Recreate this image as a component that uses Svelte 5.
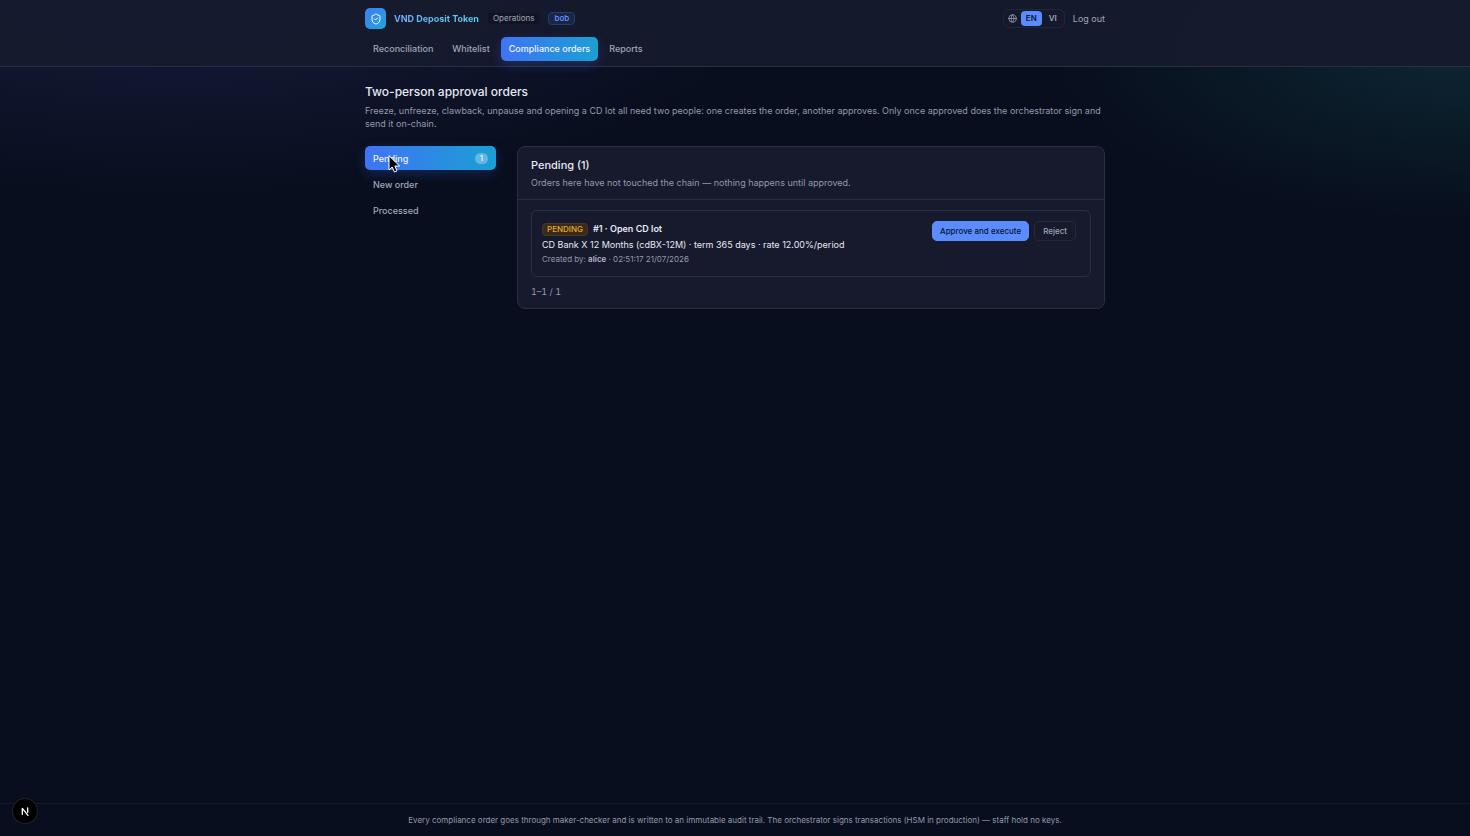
<script lang="ts">
  interface Order {
    id: number;
    status: string;
    kind: string;
    detail: string;
    creator: string;
    createdAt: string;
  }

  const nav = ["Reconciliation", "Whitelist", "Compliance orders", "Reports"];
  const langs = ["EN", "VI"];

  const orders: Order[] = [
    {
      id: 1,
      status: "PENDING",
      kind: "Open CD lot",
      detail: "CD Bank X 12 Months (cdBX-12M) · term 365 days · rate 12.00%/period",
      creator: "alice",
      createdAt: "02:51:17 21/07/2026",
    },
  ];

  let page = $state("Compliance orders");
  let lang = $state("EN");
  let tab = $state("Pending");

  let tabs = $derived([
    { name: "Pending", count: orders.length },
    { name: "New order", count: 0 },
    { name: "Processed", count: 0 },
  ]);
</script>

<div class="app">
  <header class="topbar">
    <div class="container">
      <div class="brand-row">
        <span class="logo">
          <svg viewBox="0 0 24 24" aria-hidden="true">
            <path
              d="M20 13c0 5-3.5 7.5-7.66 8.95a1 1 0 0 1-.67-.01C7.5 20.5 4 18 4 13V6a1 1 0 0 1 1-1c2 0 4.5-1.2 6.24-2.72a1.17 1.17 0 0 1 1.52 0C14.51 3.81 17 5 19 5a1 1 0 0 1 1 1z"
            />
            <path d="m9 12 2 2 4-4" />
          </svg>
        </span>
        <span class="brand">VND Deposit Token</span>
        <span class="chip">Operations</span>
        <span class="chip chip--user">bob</span>
        <div class="actions">
          <div class="langs">
            <svg viewBox="0 0 24 24" aria-hidden="true">
              <circle cx="12" cy="12" r="10" />
              <path d="M12 2a14.5 14.5 0 0 0 0 20 14.5 14.5 0 0 0 0-20" />
              <path d="M2 12h20" />
            </svg>
            {#each langs as l}
              <button class="lang" class:lang--active={lang === l} onclick={() => (lang = l)}>{l}</button>
            {/each}
          </div>
          <button class="logout">Log out</button>
        </div>
      </div>
      <nav class="nav">
        {#each nav as item}
          <a href="#top" class="nav-link" class:active={page === item} onclick={() => (page = item)}>{item}</a>
        {/each}
      </nav>
    </div>
  </header>

  <main class="container main">
    <h1>Two-person approval orders</h1>
    <p class="intro">
      Freeze, unfreeze, clawback, unpause and opening a CD lot all need two people: one creates the order,
      another approves. Only once approved does the orchestrator sign and send it on-chain.
    </p>

    <div class="layout">
      <div class="tabs">
        {#each tabs as t}
          <button class="tab" class:active={tab === t.name} onclick={() => (tab = t.name)}>
            {t.name}
            {#if t.count > 0}<span class="count">{t.count}</span>{/if}
          </button>
        {/each}
        <svg class="pointer" viewBox="0 0 12 18" aria-hidden="true">
          <path d="M1 1v14l3.2-3 2.2 5 2.6-1.1-2.2-4.9h4.4z" />
        </svg>
      </div>

      <section class="card">
        <div class="card-head">
          <h2>Pending ({orders.length})</h2>
          <p>Orders here have not touched the chain — nothing happens until approved.</p>
        </div>
        <div class="card-body">
          {#each orders as order}
            <article class="order">
              <div class="order-info">
                <div class="order-title">
                  <span class="status">{order.status}</span>
                  #{order.id} · {order.kind}
                </div>
                <div class="order-detail">{order.detail}</div>
                <div class="order-meta">Created by: <b>{order.creator}</b> · {order.createdAt}</div>
              </div>
              <div class="order-actions">
                <button class="btn btn--primary">Approve and execute</button>
                <button class="btn">Reject</button>
              </div>
            </article>
          {/each}
          <div class="range">1–{orders.length} / {orders.length}</div>
        </div>
      </section>
    </div>
  </main>

  <footer class="footer">
    Every compliance order goes through maker-checker and is written to an immutable audit trail. The
    orchestrator signs transactions (HSM in production) — staff hold no keys.
  </footer>

  <button class="dev" aria-label="Open dev tools">
    <svg viewBox="0 0 24 24" aria-hidden="true">
      <path d="M8 17V8l8.5 10.5" />
      <path d="M16 7.5v6.5" />
    </svg>
  </button>
</div>

<style>
  :global(body) {
    background: #080e1d;
  }

  .app {
    --text: #e6e9f5;
    --muted: #9499ad;
    --line: #282e43;
    --panel: #161a2c;
    --accent: #5b8cff;
    --grad: linear-gradient(90deg, #3f74f3, #1b9fd4);
    display: flex;
    flex-direction: column;
    min-height: 100vh;
    color: var(--text);
    font-family: Inter, sans-serif;
    font-size: 9px;
    line-height: 13px;
    background:
      radial-gradient(600px 200px at 12% 0, #171a3a, transparent),
      radial-gradient(420px 170px at 100% 50px, #0d2632, transparent),
      #080e1d;
  }

  button {
    font: inherit;
    color: inherit;
    background: none;
    border: 0;
    padding: 0;
    cursor: pointer;
  }

  h1,
  h2,
  p {
    margin: 0;
  }

  .container {
    width: 100%;
    max-width: 740px;
    margin: 0 auto;
  }

  .topbar {
    background: rgba(22, 27, 45, 0.9);
    border-bottom: 1px solid var(--line);
  }

  .brand-row {
    display: flex;
    align-items: center;
    gap: 8px;
    height: 37px;
  }

  .logo {
    display: grid;
    place-items: center;
    width: 21px;
    height: 21px;
    border-radius: 5px;
    background: linear-gradient(135deg, #3f7df5, #20a5dc);
  }

  svg {
    fill: none;
    stroke: currentColor;
    stroke-width: 2;
    stroke-linecap: round;
    stroke-linejoin: round;
  }

  .logo svg {
    width: 12px;
    height: 12px;
    color: #fff;
  }

  .brand {
    font-size: 9px;
    font-weight: 700;
    background: linear-gradient(90deg, #74acff, #5bd0ee);
    background-clip: text;
    color: transparent;
  }

  .chip {
    padding: 0 5px;
    border-radius: 4px;
    border: 1px solid #141828;
    background: #111523;
    color: #a3a8b9;
    font-size: 8px;
    line-height: 11px;
  }

  .chip--user {
    border-color: #263b70;
    background: #192447;
    color: #6b98ff;
    font-weight: 500;
  }

  .actions {
    display: flex;
    align-items: center;
    gap: 8px;
    margin-left: auto;
    color: #a0a6b9;
  }

  .langs {
    display: flex;
    align-items: center;
    gap: 2px;
    padding: 1px 2px 1px 4px;
    border: 1px solid #20263a;
    border-radius: 6px;
  }

  .langs svg {
    width: 9px;
    height: 9px;
    margin-right: 2px;
  }

  .lang {
    padding: 1px 5px;
    border-radius: 4px;
    font-size: 8px;
    font-weight: 600;
  }

  .lang--active {
    background: var(--accent);
    color: #0a1330;
  }

  .nav {
    display: flex;
    gap: 3px;
    padding-bottom: 5px;
  }

  .nav-link {
    padding: 0 8px;
    border-radius: 5px;
    color: #a0a6b9;
    font-weight: 500;
    line-height: 24px;
    text-decoration: none;
  }

  .active,
  .tab.active {
    background: var(--grad);
    color: #f0f6ff;
    box-shadow: 0 4px 12px rgba(63, 100, 243, 0.25);
  }

  .main {
    flex: 1;
    padding-top: 16px;
  }

  h1 {
    font-size: 12px;
    font-weight: 500;
    line-height: 17px;
  }

  .intro {
    margin-top: 4px;
    color: var(--muted);
  }

  .layout {
    display: grid;
    grid-template-columns: 131px 1fr;
    align-items: start;
    gap: 21px;
    margin-top: 16px;
  }

  .tabs {
    position: relative;
    display: grid;
    gap: 2px;
  }

  .tab {
    display: flex;
    align-items: center;
    justify-content: space-between;
    height: 24px;
    padding: 0 8px;
    border-radius: 5px;
    color: #a0a6b9;
    font-weight: 500;
  }

  .count {
    padding: 0 5px;
    border-radius: 6px;
    background: rgba(255, 255, 255, 0.3);
    font-size: 8px;
    line-height: 11px;
  }

  .pointer {
    position: absolute;
    left: 23px;
    top: 9px;
    width: 12px;
    height: 18px;
    fill: #000;
    stroke: #fff;
    stroke-width: 1;
  }

  .card {
    border: 1px solid var(--line);
    border-radius: 8px;
    background: var(--panel);
  }

  .card-head {
    padding: 10px 13px;
    border-bottom: 1px solid var(--line);
  }

  .card-head p {
    margin-top: 3px;
    color: var(--muted);
  }

  h2 {
    font-size: 11px;
    font-weight: 500;
    line-height: 16px;
  }

  .card-body {
    padding: 10px 13px;
  }

  .order {
    display: flex;
    justify-content: space-between;
    padding: 10px 14px 10px 10px;
    border: 1px solid var(--line);
    border-radius: 6px;
  }

  .order-title {
    display: flex;
    align-items: center;
    gap: 5px;
    font-weight: 600;
    line-height: 16px;
  }

  .status {
    padding: 0 4px;
    border: 1px solid #4a3722;
    border-radius: 4px;
    background: #3a2a1c;
    color: #e6ab2a;
    font-size: 8px;
    font-weight: 500;
    line-height: 11px;
  }

  .order-detail {
    line-height: 16px;
  }

  .order-meta {
    color: var(--muted);
    font-size: 8px;
  }

  .order-meta b {
    color: #b4b9ca;
    font-weight: 600;
  }

  .order-actions {
    display: flex;
    align-items: flex-start;
    gap: 5px;
  }

  .btn {
    padding: 2px 8px;
    border: 1px solid #23283b;
    border-radius: 5px;
    color: #a0a6b9;
    font-size: 8px;
    font-weight: 500;
    line-height: 14px;
  }

  .btn--primary {
    padding: 2px 7px;
    border-color: var(--accent);
    background: var(--accent);
    color: #0a1330;
  }

  .range {
    margin-top: 8px;
    color: var(--muted);
    font-variant-numeric: tabular-nums;
  }

  .footer {
    padding: 10px 16px;
    border-top: 1px solid #141a2b;
    color: var(--muted);
    font-size: 8px;
    line-height: 12px;
    text-align: center;
  }

  .dev {
    position: fixed;
    left: 13px;
    bottom: 13px;
    display: grid;
    place-items: center;
    width: 24px;
    height: 24px;
    border-radius: 50%;
    background: #000;
    box-shadow: 0 0 0 1px #202228;
    color: #fff;
  }

  .dev svg {
    width: 16px;
    height: 16px;
  }
</style>
